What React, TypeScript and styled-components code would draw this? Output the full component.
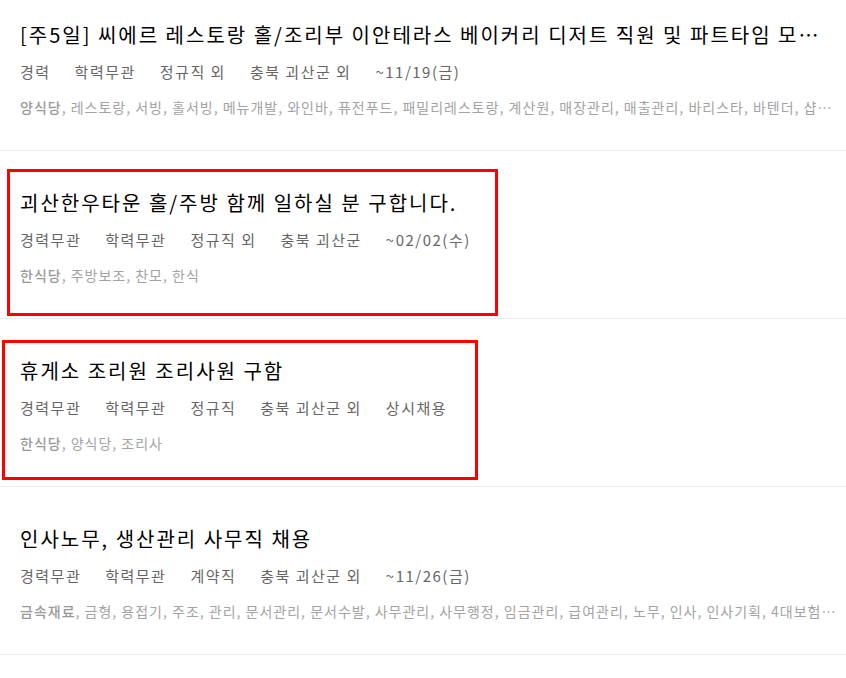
import styled, { createGlobalStyle } from 'styled-components';

interface Job {
  title: string;
  meta: string[];
  tags: string[];
  mark?: { top: number; left: number; width: number; height: number };
}

const jobs: Job[] = [
  {
    title: '[주5일] 씨에르 레스토랑 홀/조리부 이안테라스 베이커리 디저트 직원 및 파트타임 모집합니다',
    meta: ['경력', '학력무관', '정규직 외', '충북 괴산군 외', '~11/19(금)'],
    tags: [
      '양식당', '레스토랑', '서빙', '홀서빙', '메뉴개발', '와인바', '퓨전푸드', '패밀리레스토랑',
      '계산원', '매장관리', '매출관리', '바리스타', '바텐더', '샵마스터', '캐셔',
    ],
  },
  {
    title: '괴산한우타운 홀/주방 함께 일하실 분 구합니다.',
    meta: ['경력무관', '학력무관', '정규직 외', '충북 괴산군', '~02/02(수)'],
    tags: ['한식당', '주방보조', '찬모', '한식'],
    mark: { top: 18, left: 7, width: 491, height: 147 },
  },
  {
    title: '휴게소 조리원 조리사원 구함',
    meta: ['경력무관', '학력무관', '정규직', '충북 괴산군 외', '상시채용'],
    tags: ['한식당', '양식당', '조리사'],
    mark: { top: 21, left: 2, width: 476, height: 140 },
  },
  {
    title: '인사노무, 생산관리 사무직 채용',
    meta: ['경력무관', '학력무관', '계약직', '충북 괴산군 외', '~11/26(금)'],
    tags: [
      '금속재료', '금형', '용접기', '주조', '관리', '문서관리', '문서수발', '사무관리', '사무행정',
      '임금관리', '급여관리', '노무', '인사', '인사기획', '4대보험', '총무', '회계',
    ],
  },
];

const App = () => {
  return (
    <>
      <GlobalStyle />
      <List>
        {jobs.map((job) => (
          <Item key={job.title}>
            <Title>{job.title}</Title>
            <Meta>
              {job.meta.map((m) => (
                <span key={m}>{m}</span>
              ))}
            </Meta>
            <Tags>
              <strong>{job.tags[0]}</strong>
              {', ' + job.tags.slice(1).join(', ')}
            </Tags>
            {job.mark && (
              <Mark
                style={{
                  top: job.mark.top,
                  left: job.mark.left,
                  width: job.mark.width,
                  height: job.mark.height,
                }}
              />
            )}
          </Item>
        ))}
      </List>
    </>
  );
};

export default App;

const GlobalStyle = createGlobalStyle`
  html, body {
    margin: 0;
    padding: 0;
    background: #fff;
  }
  body {
    font-family: "Noto Sans CJK KR", "Noto Sans", sans-serif;
  }
`;

const List = styled.ul`
  list-style: none;
  margin: 0;
  padding: 0;
  width: 846px;
`;

const Item = styled.li`
  position: relative;
  box-sizing: border-box;
  height: 168px;
  padding: 38px 10px 0 20px;
  border-bottom: 1px solid #ebebeb;

  &:first-child {
    height: 151px;
    padding-top: 21px;
  }
`;

const Title = styled.h3`
  margin: 0;
  font-size: 20px;
  font-weight: 400;
  line-height: 28px;
  letter-spacing: 2px;
  color: #000;
  white-space: nowrap;
  overflow: hidden;
  text-overflow: ellipsis;
  padding-right: 14px;
`;

const Meta = styled.div`
  display: flex;
  gap: 24px;
  margin-top: 12px;
  font-size: 15px;
  line-height: 22px;
  letter-spacing: 1.5px;
  color: #666;
`;

const Tags = styled.p`
  margin: 14px 0 0;
  font-size: 14px;
  line-height: 20px;
  letter-spacing: 1px;
  color: #a3a3a3;
  white-space: nowrap;
  overflow: hidden;
  text-overflow: ellipsis;

  strong {
    font-weight: 500;
    color: #999;
  }
`;

const Mark = styled.div`
  position: absolute;
  box-sizing: border-box;
  border: 3px solid #ff0000;
  pointer-events: none;
`;
